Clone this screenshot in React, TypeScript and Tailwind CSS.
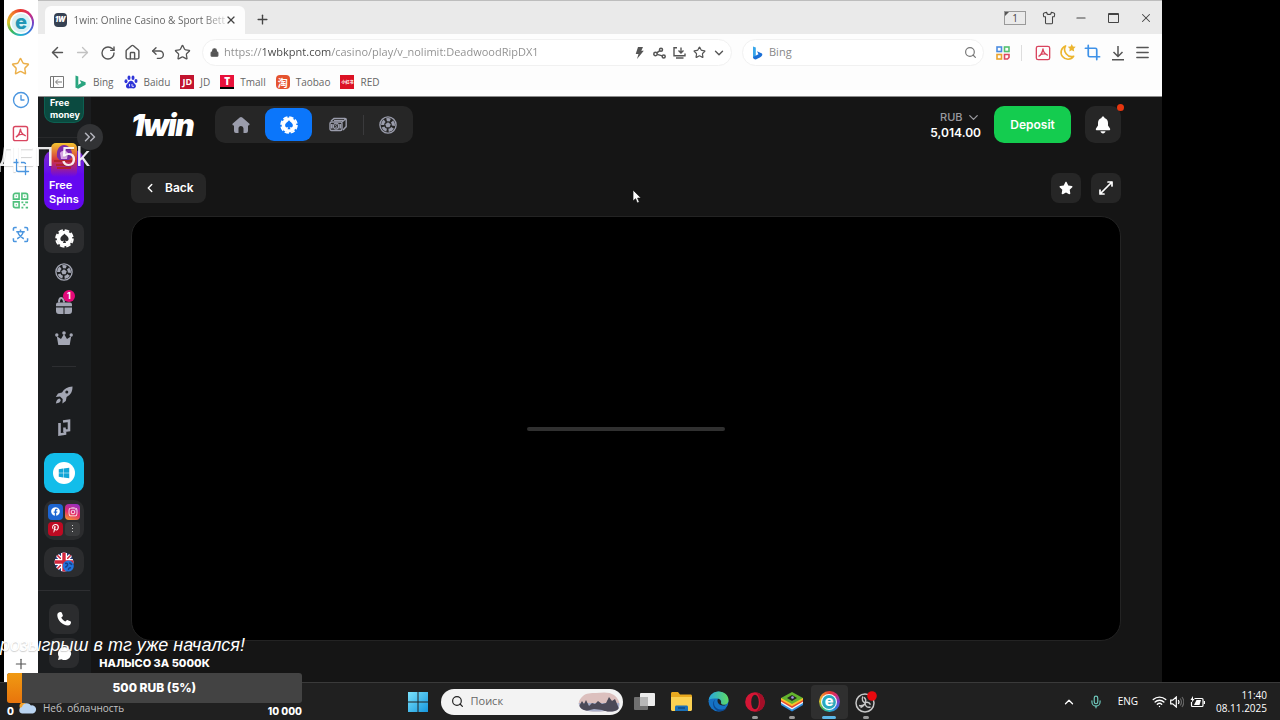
import type { ReactNode } from "react";
import {
  ArrowLeft,
  ArrowRight,
  ChevronDown,
  ChevronLeft,
  ChevronUp,
  ChevronsRight,
  Clock3,
  Crop,
  House,
  Lock,
  Menu,
  Mic,
  Minus,
  Plus,
  RotateCw,
  Search,
  Shirt,
  Star,
  Undo2,
  Wifi,
  X,
} from "lucide-react";
import { FaFacebook, FaInstagram, FaPinterestP, FaStar, FaWindows } from "react-icons/fa";

function PdfIcon({ size = 17 }: { size?: number }) {
  return (
    <svg width={size} height={size} viewBox="0 0 18 18" fill="none" stroke="#d9455f" strokeWidth="1.5">
      <rect x="1.5" y="1.5" width="15" height="15" rx="2" />
      <path d="M9 4.500C8.500 7 7.500 11 4.500 12.500M9 4.500c.3 3 2 5.500 5 6.800M6.500 10.700c2-.9 4-1 6-.5" strokeLinecap="round" />
    </svg>
  );
}

function RainbowLogo({ size, filled }: { size: number; filled?: boolean }) {
  return (
    <span
      className="flex items-center justify-center rounded-full bg-[conic-gradient(from_0deg,#e8392f,#d62a75,#7b3fc4,#2f7be0,#27b8cf,#3cb75a,#d9c62b,#f2832b,#e8392f)]"
      style={{ width: size, height: size }}
    >
      <svg width={size - 5} height={size - 5} viewBox="0 0 22 22" overflow="visible">
        <circle cx="11" cy="11" r="11" fill={filled ? "#f4fafb" : "#fff"} />
        <circle cx="11" cy="11" r="9.500" fill={filled ? "#28a9bd" : "#d9f1f5"} />
        <text
          x="11"
          y="16.500"
          textAnchor="middle"
          fontFamily="Inter, sans-serif"
          fontWeight="800"
          fontSize="20"
          fill={filled ? "#fff" : "#2297b5"}
        >
          e
        </text>
      </svg>
    </span>
  );
}

function QrIcon() {
  return (
    <svg width="17" height="17" viewBox="0 0 18 18" fill="none" stroke="#4fc07c" strokeWidth="1.700">
      <path d="M1.500 7.500v-4a2 2 0 0 1 2-2h4v6zM10.500 1.500h4a2 2 0 0 1 2 2v4h-6zM1.500 10.500h6v6h-4a2 2 0 0 1-2-2z" />
      <path d="M4 4.500h1M13 4.500h1M4 13.500h1M10 11h2M14 11h3M12 13.500h2M10 16.500h2M14.500 16.500h2.500" />
    </svg>
  );
}

function TranslateIcon() {
  return (
    <svg width="17" height="17" viewBox="0 0 18 18" fill="none" stroke="#4a95df" strokeWidth="1.600">
      <path d="M1.500 5V3a1.500 1.500 0 0 1 1.500-1.500h2M13 1.500h2A1.500 1.500 0 0 1 16.500 3v2M16.500 13v2a1.500 1.500 0 0 1-1.500 1.500h-2M5 16.500H3A1.500 1.500 0 0 1 1.500 15v-2" />
      <path d="M4.500 6h9M9 3.800V6M6 6c.8 3 3.500 6 6.500 7.500M12 6c-.8 3-3.500 6-6.500 7.500" />
    </svg>
  );
}

function MoonIcon() {
  return (
    <svg width="17" height="17" viewBox="0 0 18 18">
      <path d="M7 2A7.300 7.300 0 1 0 15.500 13 7.500 7.500 0 0 1 7 2z" fill="none" stroke="#ecb52e" strokeWidth="1.700" strokeLinejoin="round" />
      <path d="m13.500 0 1.300 2.600 2.900.4-2.100 2 .5 2.900-2.600-1.400-2.600 1.400.5-2.900-2.100-2 2.900-.4z" fill="#ecb52e" />
    </svg>
  );
}

function AppsIcon() {
  return (
    <svg width="14" height="14" viewBox="0 0 14 14" fill="none" strokeWidth="1.600">
      <rect x="1" y="1" width="4.500" height="4.500" stroke="#4c8ce0" />
      <rect x="8.500" y="1" width="4.500" height="4.500" stroke="#54c070" />
      <rect x="1" y="8.500" width="4.500" height="4.500" stroke="#eaa32c" />
      <path d="M8.500 8.500H13v3L11.500 13h-3z" stroke="#dc4860" />
    </svg>
  );
}

function PokerChip({ size, spade }: { size: number; spade: string }) {
  return (
    <svg width={size} height={size} viewBox="0 0 20 20">
      <circle cx="10" cy="10" r="8.200" fill="currentColor" />
      <circle cx="10" cy="10" r="8.800" fill="none" stroke="currentColor" strokeWidth="2" strokeDasharray="4.900 2.010" />
      <path d="M10 4.800c-1.200 1.900-4.300 3.100-4.300 5.800 0 2.400 2.700 2.800 3.600 1.300l-.9 2.900h3.200l-.9-2.900c.9 1.500 3.600 1.100 3.600-1.300 0-2.700-3.100-3.900-4.300-5.800z" fill={spade} />
    </svg>
  );
}

function Football({ size = 18 }: { size?: number }) {
  return (
    <svg width={size} height={size} viewBox="0 0 20 20" fill="none" stroke="currentColor">
      <circle cx="10" cy="10" r="9" strokeWidth="1.500" />
      <circle cx="10" cy="10" r="6" strokeWidth="3.400" strokeDasharray="5.200 2.340" strokeDashoffset="2.600" transform="rotate(-90 10 10)" />
      <path d="m10 7 3 2.200-1.200 3.400H8.200L7 9.200z" fill="currentColor" stroke="none" />
    </svg>
  );
}

function Gift() {
  return (
    <svg width="18" height="19" viewBox="0 0 18 19" fill="currentColor">
      <path d="M1 8.500A2 2 0 0 1 3 6.500h12a2 2 0 0 1 2 2V10.300H1zM1 11.500h7.500V18H4a3 3 0 0 1-3-3zM9.500 11.500H17V15a3 3 0 0 1-3 3H9.500z" />
      <path d="M4 6.500C4 3.500 5 2 6.300 2S9 4 9 6.500" fill="none" stroke="currentColor" strokeWidth="2" />
    </svg>
  );
}

function Crown() {
  return (
    <svg width="18" height="15" viewBox="0 0 18 15" fill="currentColor">
      <path d="M3.300 14 1.800 5.200 6 8 9 3l3 5 4.200-2.800L14.700 14z" />
      <circle cx="1.800" cy="4" r="1.700" />
      <circle cx="9" cy="2" r="1.800" />
      <circle cx="16.200" cy="4" r="1.700" />
    </svg>
  );
}

function Rocket() {
  return (
    <svg width="18" height="18" viewBox="0 0 18 18">
      <path d="M17.500.5c-5 .2-8.500 2.200-10.500 6L3 7.500.8 11l4.200-.5 2.700 2.600-.3 4.300 3.400-2.500.8-4c4-2 6-5.200 5.900-10.400z" fill="currentColor" />
      <circle cx="11.800" cy="6" r="1.500" fill="#1d1f21" />
      <path d="M4.500 12.500c-2 .2-3.300 2-3.600 5 3-.3 4.700-1.500 4.900-3.500z" fill="currentColor" />
    </svg>
  );
}

// stylised interlocked hooks used by the lucky jet shortcut
function LuckyHooks() {
  return (
    <svg width="15" height="18" viewBox="0 0 15 18" fill="none" stroke="currentColor" strokeWidth="2.600">
      <path d="M2.500 4v11.500l5.500-.8v-2" />
      <path d="m6 2.500 6-.7v9.400l-4.500.6V8.500" />
    </svg>
  );
}

function Cash() {
  return (
    <svg width="18" height="15" viewBox="0 0 18 15" fill="none" stroke="currentColor">
      <rect x="1" y="5" width="12" height="8.500" rx="1.500" strokeWidth="1.400" />
      <path d="m2 4 3-2.600h11a1.200 1.200 0 0 1 1.200 1.200v7L14 13M13 5l3.500-3M5 3.500h9" strokeWidth="1.400" />
      <ellipse cx="7" cy="9.200" rx="2.600" ry="3" strokeWidth="1.200" />
      <path d="M8 8c-1-.8-2.200 0-1.500.8.500.5 1.700.6 1.300 1.500-.4.700-1.500.5-2 0" />
      <path d="M2.800 7v4.500M11.200 7v4.500" strokeWidth="1.800" />
    </svg>
  );
}

function HomeSolid() {
  return (
    <svg width="18" height="18" viewBox="0 0 18 18" fill="currentColor">
      <path d="M7.700 1.500a2 2 0 0 1 2.600 0l6.900 6c.8.700.3 2-.7 2H16V15a2 2 0 0 1-2 2h-2.500v-4.500a2.500 2.500 0 0 0-5 0V17H4a2 2 0 0 1-2-2V9.500h-.5c-1 0-1.500-1.300-.7-2z" />
    </svg>
  );
}

function Bell() {
  return (
    <svg width="16" height="18" viewBox="0 0 16 18" fill="currentColor">
      <path d="M8 .5c.9 0 1.500.6 1.500 1.500 2.200.7 3.500 2.600 3.500 5v2.500l2 3c.6 1-.1 1.800-1 1.800H2c-.9 0-1.600-.8-1-1.800l2-3V7c0-2.400 1.300-4.300 3.500-5C6.500 1.100 7.100.5 8 .5zM5.500 15.300h5c-.3 1.400-1.200 2.100-2.500 2.100s-2.200-.7-2.500-2.100z" />
    </svg>
  );
}

function Phone() {
  return (
    <svg width="16" height="16" viewBox="0 0 16 16" fill="currentColor">
      <path d="M3.200 1.200 4.600 1c.6 0 1 .2 1.200.7l1 2.500c.2.500 0 1-.3 1.300L5.300 6.600c.7 1.700 2.200 3.200 4 4l1.200-1.200c.4-.3.800-.4 1.300-.2l2.600 1.100c.5.200.7.700.6 1.200-.2 1.800-1.300 3-3 3C6.500 14.500 1.500 9.500 1.300 4.300c0-1.600.7-2.700 1.900-3.100z" />
    </svg>
  );
}

function UkFlag() {
  return (
    <svg width="20" height="20" viewBox="0 0 20 20">
      <clipPath id="flag">
        <circle cx="10" cy="10" r="9.500" />
      </clipPath>
      <g clipPath="url(#flag)">
        <rect width="20" height="20" fill="#243a86" />
        <path d="m0 0 20 20M20 0 0 20" stroke="#fff" strokeWidth="4" />
        <path d="m0 0 20 20M20 0 0 20" stroke="#d3263c" strokeWidth="1.500" />
        <path d="M10 0v20M0 10h20" stroke="#fff" strokeWidth="6" />
        <path d="M10 0v20M0 10h20" stroke="#d3263c" strokeWidth="3.400" />
      </g>
      <circle cx="14.300" cy="14" r="5.500" fill="#2174de" />
      <path d="M11 11.500c2-.8 3 .4 2.500 1.700s-1.700 1-2 2.500M15.500 10.500c.5 1.500 2 1 2.300 2.500M14.500 18c-.3-1.500 1-2.500 2.500-2" stroke="#173f86" strokeWidth="1.500" fill="none" />
    </svg>
  );
}

function BingIcon() {
  return (
    <svg width="14" height="14" viewBox="0 0 14 14" fill="#2aa57f">
      <path d="m2.500.5 2.800 1v8l-2.800 3.300zM5.300 9.700l3-1.600-1.700-3 6 2.200v2.500l-7.400 4-2.700-1.300z" />
    </svg>
  );
}

function BingBlue() {
  return (
    <svg width="11" height="14" viewBox="0 0 11 14">
      <path d="m1 .5 2.800 1v9L1 11.500z" fill="#38a6ea" />
      <path d="m1 11 5.500-2.700L5 5.200 10 7.500c1 2-.3 3.500-6.200 6C2 13.500 1 12.500 1 11z" fill="#1a6fd6" />
    </svg>
  );
}

function BaiduPaw() {
  return (
    <svg width="14" height="14" viewBox="0 0 14 14" fill="#2f35d8">
      <ellipse cx="2" cy="6.300" rx="1.500" ry="2" />
      <ellipse cx="5" cy="2.800" rx="1.500" ry="2.200" />
      <ellipse cx="9" cy="2.800" rx="1.500" ry="2.200" />
      <ellipse cx="12" cy="6" rx="1.500" ry="2" />
      <path d="M7 5.800c2 0 2.700 2.200 4.200 3.500 1.300 1.200 1 4-1.500 4.100-1.800 0-3.600-.3-5.400 0-2.500 0-2.900-2.900-1.500-4.100C4.300 8 5 5.800 7 5.800z" />
      <path d="M5.500 9v2.500M8 9v2.300h2" stroke="#fff" fill="none" strokeWidth=".8" />
    </svg>
  );
}

const bookmarks: { label: string; icon: ReactNode }[] = [
  { label: "Bing", icon: <BingIcon /> },
  { label: "Baidu", icon: <BaiduPaw /> },
  { label: "JD", icon: <span className="flex size-3.5 items-center justify-center bg-[#c2142f] text-[9px] font-bold text-white">JD</span> },
  { label: "Tmall", icon: <span className="flex size-3.5 items-center justify-center border-b-2 border-black bg-[#e8113a] text-[10px] font-black text-white">T</span> },
  { label: "Taobao", icon: <span className="flex size-3.5 items-center justify-center rounded bg-[#e5532f] font-['Noto_Sans_CJK_SC',sans-serif] text-[10px] font-bold text-white">淘</span> },
  { label: "RED", icon: <span className="flex size-3.5 items-center justify-center bg-[#dc1224] font-['Noto_Sans_CJK_SC',sans-serif] text-[4px] font-bold text-white">小红书</span> },
];

function IconButton({ label, children, className = "w-[25px]" }: { label: string; children: ReactNode; className?: string }) {
  return (
    <button aria-label={label} className={`flex shrink-0 items-center justify-center ${className}`}>
      {children}
    </button>
  );
}

function BrowserRail() {
  return (
    <aside className="flex w-[34px] shrink-0 flex-col items-center bg-white pt-[9px] pr-px pb-2.5">
      <RainbowLogo size={27} />
      <div className="mt-3.5 flex flex-col">
        <IconButton label="Favorites" className="h-[33px]"><Star size={19} strokeWidth={1.8} color="#ecb04a" /></IconButton>
        <IconButton label="History" className="h-[34px]"><Clock3 size={18} strokeWidth={1.8} color="#4a95df" /></IconButton>
        <IconButton label="PDF" className="h-[33px]"><PdfIcon /></IconButton>
        <IconButton label="Screenshot" className="h-[34px]"><Crop size={18} strokeWidth={1.8} color="#4a95df" /></IconButton>
        <IconButton label="QR code" className="h-[33px]"><QrIcon /></IconButton>
        <IconButton label="Translate" className="h-[34px]"><TranslateIcon /></IconButton>
      </div>
      <button aria-label="Add tool" className="mt-auto"><Plus size={16} strokeWidth={1.8} color="#555" /></button>
    </aside>
  );
}

function TitleBar() {
  return (
    <div className="flex h-[34px] items-end border-t border-[#bdbdbd] bg-[#eaeaea] pl-[7px] text-[#444]">
      <div className="flex h-7 w-[200px] items-center rounded-t-md bg-[#fdfdfd] pr-2 pl-[9px]">
        <span className="flex size-3.5 items-center justify-center rounded-sm bg-[#364152] font-['Inter',sans-serif] text-[7px] font-black text-white italic">1W</span>
        <span className="ml-[7px] flex-1 text-[10px] whitespace-nowrap text-[#666] [mask-image:linear-gradient(90deg,#000_85%,transparent_105%)]">
          1win: Online Casino &amp; Sport Bett
        </span>
        <button aria-label="Close tab"><X size={12} strokeWidth={2.4} /></button>
      </div>
      <button aria-label="New tab" className="mb-[7px] ml-2.5"><Plus size={15} strokeWidth={2.2} /></button>
      <div className="ml-auto flex h-[33px] items-center">
        <button className="relative mr-1.5 h-3.5 w-[22px] border border-[#999] text-[10px] leading-3">
          1
          <span className="absolute top-0 left-0 border-t-4 border-r-4 border-t-[#555] border-r-transparent" />
        </button>
        <IconButton label="Skins" className="w-[33px]"><Shirt size={14} strokeWidth={1.8} /></IconButton>
        <IconButton label="Minimize" className="w-8"><Minus size={14} strokeWidth={1.8} /></IconButton>
        <IconButton label="Maximize" className="w-[33px]">
          <svg width="11" height="10" viewBox="0 0 11 10" fill="none" stroke="currentColor"><path d="M.5.500h10v9H.5zM.5 1.500h10" /></svg>
        </IconButton>
        <IconButton label="Close" className="w-8"><X size={14} strokeWidth={1.8} /></IconButton>
      </div>
    </div>
  );
}

function Toolbar() {
  return (
    <div className="flex h-9 items-center bg-[#fdfdfd] px-[7px] pt-px text-[#555]">
      <IconButton label="Back"><ArrowLeft size={17} strokeWidth={2.1} /></IconButton>
      <IconButton label="Forward"><ArrowRight size={17} strokeWidth={1.8} color="#c2c2c2" /></IconButton>
      <IconButton label="Reload"><RotateCw size={16} strokeWidth={2.1} /></IconButton>
      <IconButton label="Home"><House size={17} strokeWidth={2} /></IconButton>
      <IconButton label="Undo"><Undo2 size={16} strokeWidth={2.1} /></IconButton>
      <IconButton label="Bookmark"><Star size={17} strokeWidth={1.8} /></IconButton>
      <div className="ml-[7px] flex h-[27px] flex-1 items-center rounded-full border border-[#f1f1f1] bg-white pr-0.5 pl-[7px]">
        <Lock size={9} strokeWidth={3} fill="#555" />
        <input
          aria-label="Address"
          className="ml-[5px] min-w-0 flex-1 bg-[linear-gradient(90deg,#8d8d8d_38px,#444_38px,#444_107px,#8d8d8d_107px)] bg-clip-text text-[11px] text-transparent outline-none"
          defaultValue="https://1wbkpnt.com/casino/play/v_nolimit:DeadwoodRipDX1"
        />
        <IconButton label="Turbo" className="w-5">
          <svg width="9" height="12" viewBox="0 0 9 12" fill="currentColor"><path d="M3 0h5L6.300 3.700h2.500L2 12l1.500-5H.7z" /></svg>
        </IconButton>
        <IconButton label="Share" className="w-5">
          <svg width="13" height="12" viewBox="0 0 13 12" fill="none" stroke="currentColor" strokeWidth="1.500">
            <circle cx="2.500" cy="7" r="1.700" /><circle cx="8" cy="2.700" r="1.500" /><circle cx="10.700" cy="9.500" r="1.500" />
            <path d="m3.800 5.900 3-2.300M4.200 7.400l5 1.500" />
          </svg>
        </IconButton>
        <IconButton label="Save page" className="w-5">
          <svg width="13" height="12" viewBox="0 0 13 12" fill="none" stroke="currentColor" strokeWidth="1.400">
            <path d="M4 .8H1v8h11V6.500M3 11h7.500M8 .5v5M5.500 3.500 8 6l2.500-2.500" />
          </svg>
        </IconButton>
        <IconButton label="Star page" className="w-5"><Star size={13} strokeWidth={2.2} /></IconButton>
        <IconButton label="More" className="w-5"><ChevronDown size={14} strokeWidth={2.4} /></IconButton>
      </div>
      <div className="ml-2.5 flex h-[27px] w-[242px] items-center rounded-full border border-[#f1f1f1] bg-white pr-1.5 pl-[9px]">
        <BingBlue />
        <input aria-label="Search the web" placeholder="Bing" className="ml-1.5 min-w-0 flex-1 text-[11px] outline-none placeholder:text-[#888]" />
        <Search size={13} strokeWidth={2.2} color="#777" />
      </div>
      <IconButton label="Apps" className="ml-1.5 w-[25px]"><AppsIcon /></IconButton>
      <span className="mr-2 ml-1.5 h-4 w-px bg-[#ddd]" />
      <IconButton label="PDF tools"><PdfIcon size={16} /></IconButton>
      <IconButton label="Night mode"><MoonIcon /></IconButton>
      <IconButton label="Snip"><Crop size={17} strokeWidth={2.4} color="#3f92e8" /></IconButton>
      <IconButton label="Downloads">
        <svg width="14" height="16" viewBox="0 0 14 16" fill="none" stroke="currentColor" strokeWidth="1.500"><path d="M7 1v10M2.500 7 7 11.500 11.500 7M1 14.800h12" /></svg>
      </IconButton>
      <IconButton label="Menu"><Menu size={17} strokeWidth={2} /></IconButton>
    </div>
  );
}

function BookmarksBar() {
  return (
    <div className="flex h-[27px] items-center gap-2.5 border-b border-[#8c8c8c] bg-[#fdfdfd] pb-0.5 pl-3 text-[10px] text-[#666]">
      <button aria-label="Toggle bookmarks" className="-mr-px">
        <svg width="14" height="12" viewBox="0 0 14 12" fill="none" stroke="#777"><path d="M.5.500h13v11H.5zM3.500.5v11M12 6H6M8 3.500 5.500 6 8 8.500" /></svg>
      </button>
      {bookmarks.map((b) => (
        <a key={b.label} href="#" className="flex items-center gap-1.5">
          {b.icon}
          {b.label}
        </a>
      ))}
    </div>
  );
}

function CasinoRail() {
  return (
    <aside className="relative flex w-[53px] shrink-0 flex-col items-center bg-[#1b1d1f] pr-px text-[#a3a6b3]">
      <a href="#" className="flex h-[26px] w-10 flex-col rounded-b-[10px] border border-t-0 border-[#0c6152] bg-[#0b4a40] pl-[5px] text-[9px] leading-3 font-bold text-white">
        <span>Free</span>
        <span>money</span>
      </a>
      <span className="mt-3.5 h-px w-full bg-[#28292b]" />
      <a href="#" className="mt-[5px] flex w-10 flex-col items-center text-[11px] leading-[14px] font-semibold text-white">
        <svg width="26" height="34" viewBox="0 0 26 34" className="z-10 -mb-[27px]">
          <defs>
            <linearGradient id="slot" x1="0" y1="0" x2="0" y2="1">
              <stop offset="0" stopColor="#f6c630" />
              <stop offset=".5" stopColor="#d4343c" />
              <stop offset="1" stopColor="#6408f0" />
            </linearGradient>
          </defs>
          <rect width="26" height="34" rx="5" fill="url(#slot)" />
          <path d="M6 14C5 6 9 2 13 2s9 4 8 12l-4 4H9z" fill="#7e2aa8" />
          <path d="M9 10c2-3 6-3 8 0l-1 6h-6z" fill="#d9a6e6" />
          <path d="M3 18h20M5 22h16M6 25h14" stroke="#b3222d" strokeWidth="2" />
        </svg>
        <span className="w-full rounded-[10px] bg-linear-to-b from-[#7a25c8] to-[#6408f0] to-40% pt-7 pb-1 pl-[5px]">Free Spins</span>
      </a>
      <a href="#" aria-label="Casino" className="mt-[13px] flex h-[30px] w-10 items-center justify-center rounded-lg bg-[#2c2d2f] text-white"><PokerChip size={19} spade="#2c2d2f" /></a>
      <a href="#" aria-label="Sport" className="mt-2.5"><Football /></a>
      <a href="#" aria-label="Gifts" className="relative mt-[15px]">
        <Gift />
        <span className="absolute -top-1.5 left-2 flex size-3 items-center justify-center rounded-full bg-[#e6097a] text-[9px] font-bold text-white">1</span>
      </a>
      <a href="#" aria-label="VIP" className="mt-4"><Crown /></a>
      <span className="mt-5 h-px w-6 bg-[#2d2e31]" />
      <a href="#" aria-label="Rocket" className="mt-[19px]"><Rocket /></a>
      <a href="#" aria-label="Lucky Jet" className="mt-[15px]"><LuckyHooks /></a>
      <a href="#" aria-label="Windows app" className="mt-4 flex size-10 items-center justify-center rounded-[10px] bg-[#12bdea]">
        <span className="flex size-[22px] items-center justify-center rounded-full bg-white text-[#12a5d6]"><FaWindows size={12} /></span>
      </a>
      <div className="mt-[7px] grid size-10 grid-cols-2 gap-0.5 rounded-[10px] bg-[#2b2c2e] p-1 text-white">
        <a href="#" aria-label="Facebook" className="flex items-center justify-center rounded bg-[#1c65d2]"><FaFacebook size={9} /></a>
        <a href="#" aria-label="Instagram" className="flex items-center justify-center rounded bg-[linear-gradient(20deg,#f7a52c,#e22b6b_45%,#8a2fd0)]"><FaInstagram size={10} /></a>
        <a href="#" aria-label="Pinterest" className="flex items-center justify-center rounded bg-[#be0a22]"><FaPinterestP size={9} /></a>
        <a href="#" aria-label="More" className="flex flex-col items-center justify-center gap-[2px] rounded bg-[#3a3b3d]">
          <i className="size-px bg-[#ccc]" /><i className="size-px bg-[#ccc]" /><i className="size-px bg-[#ccc]" />
        </a>
      </div>
      <button aria-label="Language" className="mt-[7px] flex h-[30px] w-10 items-center justify-center rounded-[10px] bg-[#2b2c2e]"><UkFlag /></button>
      <span className="mt-[13px] h-px w-full bg-[#2d2e31]" />
      <a href="#" aria-label="Call" className="mt-[13px] flex size-[30px] items-center justify-center rounded-lg bg-[#2b2c2e] text-white"><Phone /></a>
      <a href="#" aria-label="Chat" className="mt-1 flex size-[30px] items-center justify-center rounded-lg bg-[#2b2c2e]">
        <svg width="15" height="15" viewBox="0 0 15 15" fill="#fff"><path d="M7.500 1a6.500 6.500 0 1 1-3 12.200L1 14l.8-3.300A6.500 6.500 0 0 1 7.500 1z" /></svg>
      </a>
      <button aria-label="Expand menu" className="absolute top-[27px] left-[39px] z-10 flex size-[26px] items-center justify-center rounded-full bg-[#323335] text-[#b4b5bd]">
        <ChevronsRight size={18} strokeWidth={2} />
      </button>
    </aside>
  );
}

function CasinoPage() {
  return (
    <main className="flex min-w-0 flex-1 flex-col bg-[#151515] pt-[9px] pr-[41px] pb-[41px] pl-10">
      <header className="flex h-[37px] items-center">
        <a href="#" className="w-[84px] text-[30px] leading-none font-black tracking-tighter text-white italic">1win</a>
        <nav className="flex h-full items-center gap-px rounded-[10px] bg-[#262626] p-0.5 text-[#9a9cab]">
          <a href="#" aria-label="Home" className="flex w-[47px] justify-center"><HomeSolid /></a>
          <a href="#" aria-label="Casino" className="flex h-full w-[47px] items-center justify-center rounded-[9px] bg-[#0b76fb] text-white"><PokerChip size={18} spade="#0b76fb" /></a>
          <a href="#" aria-label="Cash games" className="flex w-[49px] justify-center"><Cash /></a>
          <span className="h-5 w-px bg-[#3a3a3c]" />
          <a href="#" aria-label="Sports" className="flex w-[46px] justify-center"><Football /></a>
        </nav>
        <div className="ml-auto flex flex-col items-end pt-px">
          <label className="flex items-center gap-[3px] text-[11px] leading-4 font-medium text-[#9a9a9f]">
            <select aria-label="Currency" className="appearance-none bg-transparent outline-none">
              <option>RUB</option>
            </select>
            <ChevronDown size={15} strokeWidth={2} />
          </label>
          <span className="text-xs leading-4 font-semibold text-white">5,014.00</span>
        </div>
        <button className="ml-[13px] h-full w-[77px] rounded-[10px] bg-[#14cc4f] text-xs font-semibold text-white">Deposit</button>
        <button aria-label="Notifications" className="relative ml-3.5 flex h-full w-9 items-center justify-center rounded-[10px] bg-[#262626] text-white">
          <Bell />
          <span className="absolute -top-0.5 -right-[3px] size-[7px] rounded-full bg-[#e6360f]" />
        </button>
      </header>
      <div className="mt-[30px] flex h-[30px] items-center gap-2.5 text-white">
        <button className="mr-auto flex h-full w-[75px] items-center gap-2 rounded-lg bg-[#262626] pl-3 text-xs font-semibold">
          <ChevronLeft size={14} strokeWidth={2.5} />
          Back
        </button>
        <button aria-label="Add to favorites" className="flex size-[30px] items-center justify-center rounded-lg bg-[#262626]"><FaStar size={14} /></button>
        <button aria-label="Fullscreen" className="flex size-[30px] items-center justify-center rounded-lg bg-[#262626]">
          <svg width="14" height="14" viewBox="0 0 14 14" fill="none" stroke="currentColor" strokeWidth="1.700" strokeLinecap="round" strokeLinejoin="round">
            <path d="M1 13 13 1M9 1h4v4M5 13H1V9" />
          </svg>
        </button>
      </div>
      <section className="mt-[13px] flex flex-1 items-center justify-center rounded-[20px] border border-[#232323] bg-black">
        <div className="h-1 w-1/5 rounded-full bg-[#303030]" />
      </section>
    </main>
  );
}

function TaskIcon({ label, state, children }: { label: string; state?: "open" | "active"; children: ReactNode }) {
  return (
    <button
      aria-label={label}
      className={`relative flex h-[34px] w-[37px] items-center justify-center rounded ${state === "active" ? "bg-[#2f2f2f]" : ""}`}
    >
      {children}
      {state === "open" && <span className="absolute bottom-0 h-[3px] w-1.5 rounded-full bg-[#9a9a9a]" />}
      {state === "active" && <span className="absolute bottom-0 h-[3px] w-3.5 rounded-full bg-[#5cb7e8]" />}
    </button>
  );
}

function Taskbar() {
  return (
    <footer className="grid h-[38px] shrink-0 grid-cols-[1fr_auto_1fr] items-center border-t border-[#3a3a3a] bg-[#202020] font-['Open_Sans','Noto_Sans',sans-serif] text-white">
      <button className="flex items-center gap-1.5 self-end pb-1 pl-[18px] text-[10px] leading-4 text-[#c4c4c4]">
        <svg width="19" height="12" viewBox="0 0 19 12">
          <circle cx="5" cy="4" r="3.500" fill="#f2a12c" />
          <path d="M4 11.500a3.300 3.300 0 0 1 0-6.500 5 5 0 0 1 9-1.500 4 4 0 0 1 2 8z" fill="#b9d4f1" />
        </svg>
        Неб. облачность
      </button>
      <div className="flex items-center pl-1.5">
        <button aria-label="Start" className="flex w-8 items-center justify-center">
          <svg width="20" height="20" viewBox="0 0 20 20">
            <defs>
              <linearGradient id="win" x1="0" y1="0" x2="1" y2="1"><stop offset="0" stopColor="#7be2fb" /><stop offset="1" stopColor="#1596dd" /></linearGradient>
            </defs>
            <path d="M0 0h9.500v9.500H0zM10.500 0H20v9.500h-9.500zM0 10.500h9.500V20H0zM10.500 10.500H20V20h-9.500z" fill="url(#win)" />
          </svg>
        </button>
        <div className="mr-[3px] ml-[7px] flex h-[26px] w-[182px] items-center rounded-full bg-[#f3f3f3] pr-[3px] pl-2.5 text-[#222]">
          <Search size={13} strokeWidth={2.2} className="shrink-0" />
          <input aria-label="Поиск" placeholder="Поиск" className="ml-[7px] min-w-0 flex-1 text-[11px] outline-none placeholder:text-[#666]" />
          <svg width="42" height="20" viewBox="0 0 42 20" className="shrink-0">
            <clipPath id="scene">
              <path d="M2 15C-1 10 2 7 5 4c3-3 8-3 13-3 8-1 14-1 18 2 5 4 6 8 5 12-1 5-8 5-14 4-10 1-22 1-25-4z" />
            </clipPath>
            <g clipPath="url(#scene)">
              <path d="M0 0h42v20H0z" fill="#dcc0be" />
              <path d="M0 11h42v9H0z" fill="#aab0cb" />
              <path d="m0 16 4-7 2 3 2-4 3 6 3-3 3 1 3-3 4 3 4-1 3-6 3 4 3-2 5 12-10 2-8-3-8-1-8 2z" fill="#4c4a58" />
            </g>
          </svg>
        </div>
        <TaskIcon label="Task view">
          <svg width="21" height="19" viewBox="0 0 21 19">
            <rect x="0" y="5" width="14" height="13" rx="1" fill="#6f6f6f" />
            <rect x="6" y="1" width="15" height="13" rx="1" fill="#ececec" />
            <path d="M6 5h8v9H6z" fill="#b7b7b7" />
          </svg>
        </TaskIcon>
        <TaskIcon label="Explorer">
          <svg width="21" height="19" viewBox="0 0 21 19">
            <path d="M0 1.500C0 .7.600 0 1.500 0H7l2 2.500h10.500c.9 0 1.500.6 1.500 1.500v13.500H0z" fill="#e9a91f" />
            <path d="M0 5h21v12.500c0 .8-.6 1.500-1.500 1.500h-18C.6 19 0 18.300 0 17.500z" fill="#fbd153" />
            <path d="M4 19v-4c0-.8.600-1.500 1.500-1.500h10c.9 0 1.500.7 1.500 1.500v4z" fill="#1a70b8" />
            <path d="M7 16h7" stroke="#0d4a86" strokeWidth="1.500" />
          </svg>
        </TaskIcon>
        <TaskIcon label="Edge">
          <svg width="21" height="21" viewBox="0 0 21 21">
            <defs>
              <linearGradient id="edge" x1="0" y1="0" x2="1" y2="0"><stop offset="0" stopColor="#27a6df" /><stop offset="1" stopColor="#5edb64" /></linearGradient>
            </defs>
            <circle cx="10.500" cy="10.500" r="10" fill="#1572c4" />
            <path d="M.7 9C1.500 4 5.500.5 10.500.5c6 0 10 4 10 8.500 0 3.500-2.500 5-5 5-2 0-3-.8-2.500-2 .8-2-.5-4.500-4-4.500C5 7.500 1.800 7.500.7 9z" fill="url(#edge)" />
            <path d="M7.500 8C4.500 11 6 18.500 13 18.500c2.500 0 4.500-.6 6-2-2 3-5 4-8 4-6-1.500-8-9.500-3.500-12.500z" fill="#0c4a94" />
            <path d="M13 12c.5-1.800-.7-4-3-4.300-1.500 2.300.3 6.800 5 6.800 2 0 3.500-.6 4.500-1.500-2.500 1.500-6.500 1-6.500-1z" fill="#202020" />
          </svg>
        </TaskIcon>
        <TaskIcon label="Opera" state="open">
          <svg width="20" height="20" viewBox="0 0 20 20">
            <circle cx="10" cy="10" r="9.800" fill="#d41635" />
            <path d="M10 .2a9.800 9.800 0 0 1 0 19.600c3-1 5-5 5-9.800S13 1.200 10 .2z" fill="#a30f28" />
            <ellipse cx="10" cy="10" rx="3.800" ry="7.300" fill="#202020" />
          </svg>
        </TaskIcon>
        <TaskIcon label="BlueStacks" state="open">
          <svg width="22" height="20" viewBox="0 0 22 20">
            <path d="m0 13 11 6.500L22 13v-3H0z" fill="#2f8fe0" />
            <path d="m0 11 11 6.500L22 11V8.500H0z" fill="#f3f3f3" />
            <path d="m0 9.500 11 6.500 11-6.500V7H0z" fill="#e8442c" />
            <path d="m0 8 11 6.200L22 8V6H0z" fill="#f6c22b" />
            <path d="M0 6 11 0l11 6-11 6z" fill="#63b32e" />
            <path d="m6 6 5-3 5 3-5 3z" fill="#252525" />
            <circle cx="11.500" cy="5.500" r="1.300" fill="#a79bea" />
          </svg>
        </TaskIcon>
        <TaskIcon label="Browser" state="active">
          <RainbowLogo size={21} filled />
        </TaskIcon>
        <TaskIcon label="OBS" state="open">
          <svg width="24" height="22" viewBox="0 0 24 22">
            <circle cx="11" cy="12" r="9" fill="#242424" stroke="#c7c7c7" strokeWidth="1.500" />
            <path d="M9 5.500c-2 3 0 6 2.500 6.300M16.500 16c-3 1-6-1-5.200-4.300M5 14.500c3 .8 6-.5 6.300-3M11.300 11.600c2.500-.8 4.500.5 5.200 2M11.300 11.600c1-2.200.2-4-1.300-5.200M11.300 11.600C10.500 14 9 15.500 6.500 16.500" fill="none" stroke="#c7c7c7" strokeWidth="1.400" />
            <circle cx="18" cy="5" r="4.800" fill="#e8090e" />
          </svg>
        </TaskIcon>
      </div>
      <div className="flex items-center justify-end pr-[13px] text-[10px]">
        <ChevronUp size={14} strokeWidth={2.2} />
        <Mic size={14} strokeWidth={2} color="#6fc9bd" className="mr-[15px] ml-[13px]" />
        <button>ENG</button>
        <Wifi size={15} strokeWidth={2.2} className="mr-[3px] ml-3.5" />
        <svg width="14" height="12" viewBox="0 0 14 12" fill="none" stroke="#fff" strokeWidth="1.200">
          <path d="M.7 4.200h2L6.300 1v10L2.700 7.800h-2z" />
          <path d="M8.200 4c.8 1 .8 3 0 4" />
          <path d="M10.200 2.500c1.500 2 1.500 5 0 7M12 1c2.200 3 2.200 7 0 10" stroke="#666" />
        </svg>
        <svg width="15" height="12" viewBox="0 0 15 12" className="mr-[11px] ml-1.5">
          <path d="M4.500 2.500h7.500a1 1 0 0 1 1 1v6a1 1 0 0 1-1 1H2.500a1 1 0 0 1-1-1V6M14.500 5v3" fill="none" stroke="#fff" strokeWidth="1.200" />
          <path d="M4 9h5.500l1.500-5H6.500z" fill="#fff" />
          <path d="M3 0 .5 4h1.800L1.500 7 4.500 3H3z" fill="#fff" />
        </svg>
        <time className="text-right leading-[13px]">
          11:40
          <br />
          08.11.2025
        </time>
      </div>
    </footer>
  );
}

function DonationGoal() {
  const percent = 5;
  return (
    <div className="absolute bottom-0 left-[7px] flex w-[295px] flex-col items-center font-['Inter',sans-serif] font-extrabold text-white">
      <span className="text-[11px] leading-5">НАЛЫСО ЗА 5000К</span>
      <div className="flex h-[30px] w-full overflow-hidden rounded-[3px] bg-[#434343]">
        <div className="bg-linear-to-b from-[#f09a12] to-[#e8740c]" style={{ width: `${percent}%` }} />
        <span className="-ml-[15px] flex-1 text-center text-xs leading-[30px]">500 RUB (5%)</span>
      </div>
      <div className="flex w-full justify-between text-[10px] leading-[17px]">
        <span>0</span>
        <span>10 000</span>
      </div>
    </div>
  );
}

export default function App() {
  return (
    <div className="relative flex h-screen flex-col overflow-hidden bg-black">
      <div className="mr-[118px] ml-1 flex min-h-0 flex-1">
        <BrowserRail />
        <div className="flex min-w-0 flex-1 flex-col font-['Open_Sans','Noto_Sans',sans-serif]">
          <TitleBar />
          <Toolbar />
          <BookmarksBar />
          <div className="flex min-h-0 flex-1 font-['Inter',sans-serif]">
            <CasinoRail />
            <CasinoPage />
          </div>
        </div>
      </div>
      <Taskbar />

      <p className="absolute top-[143px] -left-0.5 z-20 font-['Liberation_Sans',sans-serif] text-[27px] leading-7 whitespace-nowrap text-white opacity-90 text-shadow-xs">
        ДЕП 5k
      </p>
      <p className="absolute top-[635px] left-0 font-['Liberation_Sans',sans-serif] text-[18px] leading-5 whitespace-nowrap text-white italic text-shadow-xs">
        розыгрыш в тг уже начался!
      </p>
      <DonationGoal />
      <svg className="absolute top-[189px] left-[632px]" width="10" height="15" viewBox="0 0 10 15">
        <path d="M1 1v11l2.600-2.300L5.300 14l2-.9-1.700-4H9z" fill="#fff" stroke="#111" strokeWidth=".7" />
      </svg>
    </div>
  );
}
